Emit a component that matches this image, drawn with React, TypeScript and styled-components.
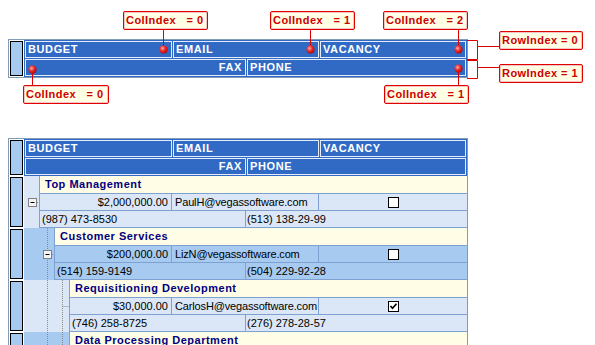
import React from "react"
import styled, { createGlobalStyle } from "styled-components"

// palette
const LINE = "#7ea1d2"
const TONES = { light: "#dbe7f6", medium: "#a6caf0" }
const RED = "#e00000"

const GlobalStyle = createGlobalStyle`
  html, body {
    margin: 0;
    padding: 0;
    background: #ffffff;
    overflow: hidden;
  }
  body {
    font-family: "Liberation Sans", Arial, sans-serif;
    font-size: 11px;
    color: #000000;
  }
`

// layout
const Page = styled.div`
  width: 595px;
  height: 345px;
  overflow: hidden;
`

const Diagram = styled.div`
  position: relative;
  height: 138px;
  padding: 39px 0 0 8px;
  box-sizing: border-box;
`

const Sheet = styled.div`
  padding-left: 8px;
`

const Grid = styled.div`
  width: 460px;
  box-sizing: border-box;
  border: 1px solid #7f9db9;
  background: #ffffff;
`

const Band = styled.div`
  display: flex;
`

const SelectorCell = styled.div`
  flex: none;
  width: 15px;
  box-sizing: border-box;
  padding: 1px;
  display: flex;
`

const SelectorBox = styled.div`
  flex: 1;
  background: #a6caf0;
  border: 1px solid #000000;
`

// header
const HeaderBlock = styled.div`
  flex: 1;
  background: #316ac5;
  padding: 1px;
  display: flex;
  flex-direction: column;
  gap: 1px;
`

const HeaderRow = styled.div<{ $cols: string }>`
  display: grid;
  grid-template-columns: ${({ $cols }) => $cols};
  gap: 1px;
`

const HeaderCell = styled.div<{ $align?: string }>`
  height: 17px;
  box-sizing: border-box;
  border: 1px solid #e4ecf9;
  color: #ffffff;
  font-weight: bold;
  letter-spacing: 0.6px;
  line-height: 15px;
  padding: 0 3px 0 2px;
  text-align: ${({ $align }) => $align ?? "left"};
  white-space: nowrap;
  overflow: hidden;
`

// records
const Indent = styled.div<{ $w: number; $bg: string }>`
  flex: none;
  width: ${({ $w }) => $w}px;
  background: ${({ $bg }) => $bg};

  svg {
    display: block;
  }
`

const Body = styled.div`
  flex: 1;
  display: flex;
  flex-direction: column;
  border-left: 1px solid ${LINE};
  border-bottom: 1px solid ${LINE};
`

const Title = styled.div`
  height: 17px;
  background: #fffde6;
  color: #000080;
  font-weight: bold;
  letter-spacing: 0.5px;
  line-height: 17px;
  padding-left: 5px;
  white-space: nowrap;
`

const DataRow = styled.div<{ $cols: string; $bg: string }>`
  display: grid;
  grid-template-columns: ${({ $cols }) => $cols};
  height: 17px;
  box-sizing: border-box;
  border-top: 1px solid ${LINE};
  background: ${({ $bg }) => $bg};
`

const Cell = styled.div<{ $align?: string; $pad?: string; $tight?: boolean }>`
  display: flex;
  align-items: center;
  justify-content: ${({ $align }) =>
    $align === "right" ? "flex-end" : $align === "center" ? "center" : "flex-start"};
  padding: ${({ $pad }) => $pad ?? "0 2px"};
  letter-spacing: ${({ $tight }) => ($tight ? "-0.15px" : "normal")};
  line-height: 16px;
  white-space: nowrap;
  overflow: hidden;

  & + & {
    border-left: 1px solid ${LINE};
  }
`

const CheckBox = styled.span`
  width: 11px;
  height: 11px;
  box-sizing: border-box;
  border: 1px solid #000000;
  background: #ffffff;
  display: inline-flex;

  svg {
    display: block;
  }
`

// annotations
const Overlay = styled.svg`
  position: absolute;
  left: 0;
  top: 0;
  pointer-events: none;
`

const Callout = styled.div<{ $x: number; $y: number; $w: number }>`
  position: absolute;
  left: ${({ $x }) => $x}px;
  top: ${({ $y }) => $y}px;
  width: ${({ $w }) => $w}px;
  height: 19px;
  box-sizing: border-box;
  border: 1px solid ${RED};
  border-radius: 2px;
  background: #ffffe6;
  box-shadow: inset 0 0 0 1px #f6c4c4;
  color: #cc0000;
  font-weight: bold;
  letter-spacing: 0.45px;
  line-height: 17px;
  padding-left: 2px;
  white-space: pre;
`

// data
interface Dept {
  level: number
  title: string
  budget: string
  email: string
  vacancy: boolean
  fax: string
  phone: string
  parent: boolean
  tone: "light" | "medium"
}

const depts: Dept[] = [
  { level: 0, title: "Top Management", budget: "$2,000,000.00", email: "PaulH@vegassoftware.com", vacancy: false, fax: "(987) 473-8530", phone: "(513) 138-29-99", parent: true, tone: "light" },
  { level: 1, title: "Customer Services", budget: "$200,000.00", email: "LizN@vegassoftware.com", vacancy: false, fax: "(514) 159-9149", phone: "(504) 229-92-28", parent: true, tone: "medium" },
  { level: 2, title: "Requisitioning Development", budget: "$30,000.00", email: "CarlosH@vegassoftware.com", vacancy: true, fax: "(746) 258-8725", phone: "(276) 278-28-57", parent: false, tone: "light" },
  { level: 2, title: "Data Processing Department", budget: "$45,000.00", email: "JohnS@vegassoftware.com", vacancy: false, fax: "(613) 442-1187", phone: "(312) 557-10-34", parent: false, tone: "medium" },
]

const callouts = [
  { x: 123, y: 11, w: 85, text: "ColIndex   = 0" },
  { x: 270, y: 11, w: 85, text: "ColIndex   = 1" },
  { x: 383, y: 11, w: 85, text: "ColIndex   = 2" },
  { x: 499, y: 31, w: 84, text: "RowIndex = 0" },
  { x: 499, y: 64, w: 84, text: "RowIndex = 1" },
  { x: 23, y: 85, w: 86, text: "ColIndex   = 0" },
  { x: 384, y: 85, w: 85, text: "ColIndex   = 1" },
]

const dots = [
  { x: 163, y: 49 },
  { x: 310, y: 49 },
  { x: 458, y: 49 },
  { x: 32, y: 69 },
  { x: 458, y: 68 },
]

function Header() {
  return (
    <Band>
      <SelectorCell>
        <SelectorBox />
      </SelectorCell>
      <HeaderBlock>
        <HeaderRow $cols="147px 146px 146px">
          <HeaderCell>BUDGET</HeaderCell>
          <HeaderCell>EMAIL</HeaderCell>
          <HeaderCell>VACANCY</HeaderCell>
        </HeaderRow>
        <HeaderRow $cols="221px 219px">
          <HeaderCell $align="right">FAX</HeaderCell>
          <HeaderCell>PHONE</HeaderCell>
        </HeaderRow>
      </HeaderBlock>
    </Band>
  )
}

// dotted tree connectors and the expand box
function TreeLines({ level, parent }: { level: number; parent: boolean }) {
  const w = 15 * (level + 1)
  const own = 15 * level + 8.5
  const verticals = []
  for (let k = 1; k <= level; k++) verticals.push(15 * k + 8.5)
  return (
    <svg width={w} height={51}>
      {verticals.map((x) => (
        <line key={x} x1={x} y1={0} x2={x} y2={51} stroke="#8a8a8a" strokeDasharray="1 1" />
      ))}
      {level > 0 && !parent && (
        <line x1={own} y1={26.5} x2={w} y2={26.5} stroke="#8a8a8a" strokeDasharray="1 1" />
      )}
      {parent && (
        <g>
          <line x1={own + 4.5} y1={26.5} x2={w} y2={26.5} stroke="#8a8a8a" strokeDasharray="1 1" />
          <rect x={own - 4} y={22.5} width={8} height={8} fill="#f4f4f4" stroke="#808080" />
          <line x1={own - 2} y1={26.5} x2={own + 2} y2={26.5} stroke="#000000" />
        </g>
      )}
    </svg>
  )
}

function Check({ on }: { on: boolean }) {
  return (
    <CheckBox>
      {on && (
        <svg width={9} height={9} viewBox="0 0 9 9">
          <path d="M1.5 4 L3.5 6.2 L7.5 1.8" fill="none" stroke="#000" strokeWidth={1.7} />
        </svg>
      )}
    </CheckBox>
  )
}

function DeptRecord({ d }: { d: Dept }) {
  const bg = TONES[d.tone]
  return (
    <Band>
      <SelectorCell>
        <SelectorBox />
      </SelectorCell>
      <Indent $w={15 * (d.level + 1)} $bg={bg}>
        <TreeLines level={d.level} parent={d.parent} />
      </Indent>
      <Body>
        <Title>{d.title}</Title>
        <DataRow $cols="1fr 147px 149px" $bg={bg}>
          <Cell $align="right" $pad="0 3px 0 2px">{d.budget}</Cell>
          <Cell $pad="0 1px 0 3px" $tight>{d.email}</Cell>
          <Cell $align="center">
            <Check on={d.vacancy} />
          </Cell>
        </DataRow>
        <DataRow $cols="1fr 222px" $bg={bg}>
          <Cell>{d.fax}</Cell>
          <Cell $pad="0 2px 0 1px">{d.phone}</Cell>
        </DataRow>
      </Body>
    </Band>
  )
}

function Annotations() {
  return (
    <>
      <Overlay width={595} height={138}>
        <defs>
          <radialGradient id="dot" cx="0.38" cy="0.35" r="0.7">
            <stop offset="0" stopColor="#ffb0b0" />
            <stop offset="0.45" stopColor="#f03030" />
            <stop offset="1" stopColor="#b00000" />
          </radialGradient>
        </defs>
        <g stroke={RED} strokeWidth={1} fill="none">
          <line x1={163.5} y1={30} x2={163.5} y2={49} />
          <line x1={310.5} y1={30} x2={310.5} y2={49} />
          <line x1={458.5} y1={30} x2={458.5} y2={49} />
          <line x1={32.5} y1={69} x2={32.5} y2={85} />
          <line x1={458.5} y1={68} x2={458.5} y2={85} />
          <polyline points="467,40.5 477.5,40.5 477.5,59.5 467,59.5" />
          <line x1={477.5} y1={46.5} x2={499} y2={46.5} />
          <polyline points="467,60.5 477.5,60.5 477.5,78.5 467,78.5" />
          <line x1={477.5} y1={67.5} x2={499} y2={67.5} />
        </g>
        {dots.map((p) => (
          <circle key={`${p.x}-${p.y}`} cx={p.x + 0.5} cy={p.y + 0.5} r={4} fill="url(#dot)" />
        ))}
      </Overlay>
      {callouts.map((c) => (
        <Callout key={`${c.x}-${c.y}`} $x={c.x} $y={c.y} $w={c.w}>
          {c.text}
        </Callout>
      ))}
    </>
  )
}

export default function App() {
  return (
    <Page>
      <GlobalStyle />
      <Diagram>
        <Grid>
          <Header />
        </Grid>
        <Annotations />
      </Diagram>
      <Sheet>
        <Grid>
          <Header />
          {depts.map((d) => (
            <DeptRecord key={d.title} d={d} />
          ))}
        </Grid>
      </Sheet>
    </Page>
  )
}
